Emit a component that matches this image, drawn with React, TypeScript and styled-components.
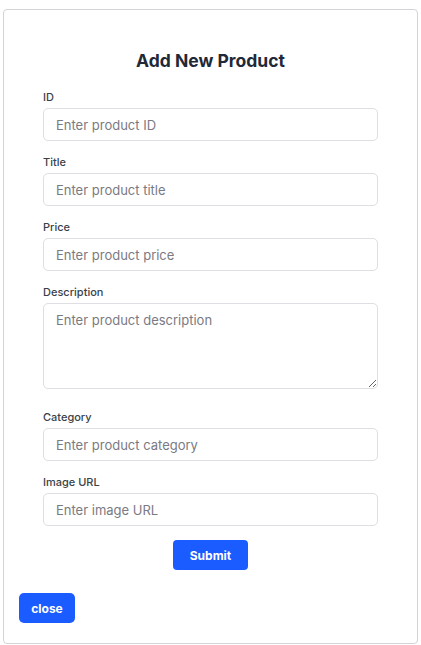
import React from "react";
import styled, { createGlobalStyle } from "styled-components";

const Global = createGlobalStyle`
  html, body { margin: 0; padding: 0; background: #ffffff; }
  body { font-family: Inter, "Noto Sans", Arial, sans-serif; }
  * { box-sizing: border-box; }
`;

const Card = styled.div`
  margin: 9px 3px 0 3px;
  width: 415px;
  height: 635px;
  border: 1px solid #d4d4d8;
  border-radius: 4px;
  background: #fff;
  padding: 0 15px;
  display: flex;
  flex-direction: column;
`;

const Title = styled.h2`
  margin: 40px 0 17px;
  font-size: 17.5px;
  line-height: 22px;
  font-weight: 700;
  color: #1f2937;
  text-align: center;
`;

const Form = styled.form`
  display: flex;
  flex-direction: column;
  padding: 0 24px;
`;

const Field = styled.div<{ $extra?: number }>`
  display: flex;
  flex-direction: column;
  margin-bottom: ${(p) => 13 + (p.$extra || 0)}px;
`;

const Label = styled.label`
  font-size: 11px;
  line-height: 17px;
  font-weight: 500;
  color: #3b3f48;
  margin-bottom: 2px;
`;

const Input = styled.input`
  height: 33px;
  width: 100%;
  border: 1px solid #dedee4;
  border-radius: 5px;
  padding: 0 12px;
  font-family: inherit;
  font-size: 13px;
  color: #111827;
  outline: none;
  &::placeholder { color: #7a7a83; }
`;

const TextArea = styled.textarea`
  display: block;
  height: 86px;
  width: 100%;
  border: 1px solid #dedee4;
  border-radius: 5px;
  padding: 7px 12px;
  font-family: inherit;
  font-size: 13px;
  line-height: 18px;
  color: #111827;
  outline: none;
  resize: vertical;
  &::placeholder { color: #7a7a83; }
`;

const Button = styled.button<{ $w: number; $h: number; $r: number }>`
  width: ${(p) => p.$w}px;
  height: ${(p) => p.$h}px;
  border: none;
  border-radius: ${(p) => p.$r}px;
  background: #1a5cff;
  color: #fff;
  font-family: inherit;
  font-size: 12px;
  font-weight: 700;
  cursor: pointer;
`;

const SubmitRow = styled.div`
  display: flex;
  justify-content: center;
  margin-top: 1px;
`;

const CloseRow = styled.div`
  margin-top: 23px;
`;

const fields = [
  { label: "ID", ph: "Enter product ID" },
  { label: "Title", ph: "Enter product title" },
  { label: "Price", ph: "Enter product price" },
];
const fields2 = [
  { label: "Category", ph: "Enter product category" },
  { label: "Image URL", ph: "Enter image URL" },
];

export default function App() {
  return (
    <>
      <Global />
      <Card>
        <Title>Add New Product</Title>
        <Form onSubmit={(e) => e.preventDefault()}>
          {fields.map((f) => (
            <Field key={f.label}>
              <Label>{f.label}</Label>
              <Input placeholder={f.ph} />
            </Field>
          ))}
          <Field $extra={7}>
            <Label>Description</Label>
            <TextArea placeholder="Enter product description" />
          </Field>
          {fields2.map((f) => (
            <Field key={f.label}>
              <Label>{f.label}</Label>
              <Input placeholder={f.ph} />
            </Field>
          ))}
          <SubmitRow>
            <Button type="submit" $w={75} $h={30} $r={4}>Submit</Button>
          </SubmitRow>
        </Form>
        <CloseRow>
          <Button type="button" $w={56} $h={30} $r={5}>close</Button>
        </CloseRow>
      </Card>
    </>
  );
}
